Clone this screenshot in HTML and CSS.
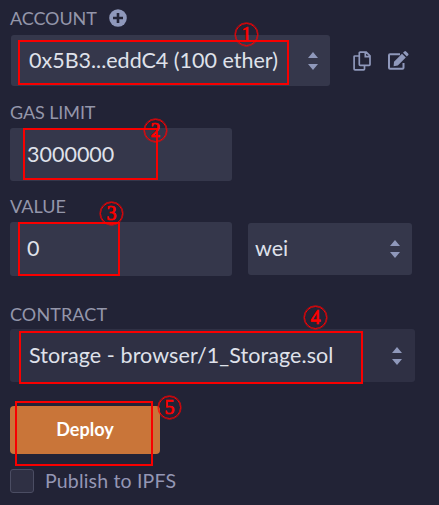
FILE: index.html
```
<!DOCTYPE html>
<html lang="en">
<head>
<meta charset="utf-8">
<title>Deploy</title>
<link rel="stylesheet" href="styles.css">
</head>
<body>
<main class="panel">
  <section class="field account">
    <div class="label"><span class="t-account">ACCOUNT</span>
      <svg class="plus" viewBox="0 0 18 18"><circle cx="9" cy="9" r="8.8" fill="#8f98bb"/><path d="M9 4v10M4 9h10" stroke="#222336" stroke-width="2.6"/></svg>
    </div>
    <div class="row">
      <div class="box select account-box"><span class="t-address">0x5B3...eddC4 (100 ether)</span>
        <svg class="arrows" viewBox="0 0 10 18"><path d="M5 0l5 6H0zM0 12h10l-5 6z"/></svg>
      </div>
      <svg class="copy" viewBox="0 0 18 20"><path d="M7.2 1.1h6l3.8 3.8v8.5q0 .9-.9.9H7.2q-.9 0-.9-.9V2q0-.9.9-.9zM12.3 1.5v4.2h4.4M6 5H2q-.9 0-.9.9v12q0 .9.9.9h8.6q.9 0 .9-.9v-3.2" fill="none" stroke="#8f98bb" stroke-width="1.7"/></svg>
      <svg class="edit" viewBox="0 0 21 19"><path d="M12 3.2H2q-1 0-1 1v12.6q0 1 1 1h12.5q1 0 1-1V12" fill="none" stroke="#8f98bb" stroke-width="2"/><path d="M6 10.8l8-8 3.8 3.8-8 8-4.2.6zM15 1.8l1.3-1.3q.9-.8 1.8 0l2 2q.8.9 0 1.8l-1.3 1.3z" fill="#8f98bb"/></svg>
    </div>
  </section>
  <section class="field gas">
    <div class="label"><span class="t-gas">GAS LIMIT</span></div>
    <div class="box input gas-box"><span class="t-number">3000000</span></div>
  </section>
  <section class="field value">
    <div class="label"><span class="t-value">VALUE</span></div>
    <div class="row">
      <div class="box input value-box"><span class="t-number">0</span></div>
      <div class="box select unit-box"><span class="t-unit">wei</span>
        <svg class="arrows" viewBox="0 0 10 18"><path d="M5 0l5 6H0zM0 12h10l-5 6z"/></svg>
      </div>
    </div>
  </section>
  <section class="field contract">
    <div class="label"><span class="t-contract">CONTRACT</span></div>
    <div class="box select contract-box"><span class="t-storage">Storage - browser/1_Storage.sol</span>
      <svg class="arrows" viewBox="0 0 10 18"><path d="M5 0l5 6H0zM0 12h10l-5 6z"/></svg>
    </div>
  </section>
  <button class="deploy">Deploy</button>
  <label class="publish"><span class="check"></span><span class="t-publish">Publish to IPFS</span></label>

  <div class="frame f1"></div><div class="mark m1">1</div>
  <div class="frame f2"></div><div class="mark m2">2</div>
  <div class="frame f3"></div><div class="mark m3">3</div>
  <div class="frame f4"></div><div class="mark m4">4</div>
  <div class="frame f5"></div><div class="mark m5">5</div>
</main>
</body>
</html>
```
FILE: styles.css
```
* { box-sizing: border-box; }
body { margin: 0; background: #222336; font-family: Lato, "Open Sans", sans-serif; }
.panel { position: relative; width: 439px; height: 505px; padding: 8px 0 0 10px; overflow: hidden; }
.label { display: flex; align-items: center; height: 20px; font-size: 18px; line-height: 20px; color: #9496aa; white-space: nowrap; }
.t-account, .t-gas { letter-spacing: -.1px; }
.t-gas, .t-value { padding-bottom: 2px; }
.t-contract { letter-spacing: .1px; }
.row { display: flex; align-items: center; }
.box { display: flex; align-items: center; background: #35374b; border-radius: 3px; color: #dfe1ea; font-size: 21.5px; line-height: 26px; white-space: nowrap; }
.box > span { padding-bottom: 2px; }
.select { justify-content: space-between; }
.arrows { width: 10px; height: 18px; fill: #8f98bb; flex: none; }

.account { height: 95px; }
.plus { width: 18px; height: 18px; margin-left: 12px; }
.account .row { margin-top: 7px; }
.account-box { width: 319px; height: 51px; margin-left: 1px; padding: 0 12px 0 18px; }
.copy { width: 18px; height: 20px; margin-left: 23px; }
.edit { width: 21px; height: 19px; margin-left: 17px; }

.gas { height: 94px; }
.gas-box { width: 222px; height: 53px; margin-top: 5px; padding-left: 17px; }
.value { height: 107px; }
.value .row { margin-top: 5px; }
.value-box { width: 222px; height: 54px; padding-left: 17px; }
.unit-box { width: 164px; height: 52px; margin-left: 16px; padding: 0 12px 0 7px; }
.contract { height: 102px; }
.contract-box { width: 405px; height: 53px; margin-top: 5px; padding: 0 13px 0 19px; background: #2f3044; }
.t-storage { letter-spacing: .08px; }

.deploy { display: block; width: 150px; height: 48px; padding: 0 0 2px; border: 0; border-radius: 4px; background: #c97539; color: #fff; font: bold 18px/24px Lato, sans-serif; }
.publish { display: flex; align-items: center; height: 24px; margin-top: 15px; color: #9496b4; font-size: 19.5px; line-height: 24px; letter-spacing: .18px; white-space: nowrap; }
.check { width: 24px; height: 24px; margin-right: 11px; border: 1px solid #4b4d63; border-radius: 3px; background: #2f3044; }

.frame { position: absolute; border: 2px solid #f80000; }
.f1 { left: 18px; top: 40px; width: 271px; height: 45px; }
.f2 { left: 23px; top: 128px; width: 135px; height: 52px; }
.f3 { left: 18px; top: 222px; width: 102px; height: 54px; }
.f4 { left: 19px; top: 331px; width: 344px; height: 53px; }
.f5 { left: 15px; top: 401px; width: 138px; height: 65px; }
.mark { position: absolute; width: 23px; height: 23px; border: 1.4px solid #f00; border-radius: 50%; color: #f00; font: 20px/21px "Liberation Serif", serif; text-align: center; -webkit-text-stroke: .7px #f00; box-shadow: 0 0 0 .4px #f00; }
.m1 { left: 235px; top: 23px; }
.m2 { left: 144px; top: 119px; }
.m3 { left: 100px; top: 202px; }
.m4 { left: 304px; top: 306px; }
.m5 { left: 158px; top: 396px; }
```
